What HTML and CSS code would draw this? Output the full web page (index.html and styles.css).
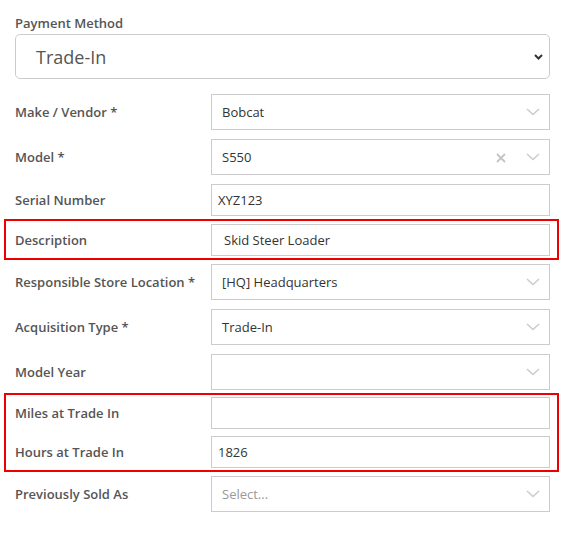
FILE: index.html
```html
<!DOCTYPE html>
<html lang="en">
<head>
<meta charset="UTF-8">
<meta name="viewport" content="width=device-width, initial-scale=1.0">
<title>Equipment - Trade-In</title>
<link rel="stylesheet" href="styles.css">
</head>
<body>
<form class="form">
  <div class="field-top">
    <label class="top-label">Payment Method</label>
    <div class="native-select">
      <span>Trade-In</span>
      <svg class="caret" width="9" height="6" viewBox="0 0 9 6"><path d="M1 1l3.5 3.5L8 1" fill="none" stroke="#333" stroke-width="2"/></svg>
    </div>
  </div>

  <div class="row">
    <label class="row-label">Make / Vendor *</label>
    <div class="select">
      <span class="value">Bobcat</span>
      <span class="indicators">
        <svg class="chev" width="14" height="8" viewBox="0 0 14 8"><path d="M1 1l6 5.5L13 1" fill="none" stroke="#ccc" stroke-width="1.6"/></svg>
      </span>
    </div>
  </div>

  <div class="row">
    <label class="row-label">Model *</label>
    <div class="select">
      <span class="value">S550</span>
      <span class="indicators">
        <svg class="clear" width="10" height="10" viewBox="0 0 10 10"><path d="M1 1l8 8M9 1l-8 8" fill="none" stroke="#c4c4c4" stroke-width="1.8"/></svg>
        <svg class="chev" width="14" height="8" viewBox="0 0 14 8"><path d="M1 1l6 5.5L13 1" fill="none" stroke="#ccc" stroke-width="1.6"/></svg>
      </span>
    </div>
  </div>

  <div class="row">
    <label class="row-label">Serial Number</label>
    <input class="input" value="XYZ123">
  </div>

  <div class="highlight">
    <div class="row">
      <label class="row-label">Description</label>
      <input class="input input-wide" value="Skid Steer Loader">
    </div>
  </div>

  <div class="row">
    <label class="row-label">Responsible Store Location *</label>
    <div class="select">
      <span class="value">[HQ] Headquarters</span>
      <span class="indicators">
        <svg class="chev" width="14" height="8" viewBox="0 0 14 8"><path d="M1 1l6 5.5L13 1" fill="none" stroke="#ccc" stroke-width="1.6"/></svg>
      </span>
    </div>
  </div>

  <div class="row">
    <label class="row-label">Acquisition Type *</label>
    <div class="select">
      <span class="value">Trade-In</span>
      <span class="indicators">
        <svg class="chev" width="14" height="8" viewBox="0 0 14 8"><path d="M1 1l6 5.5L13 1" fill="none" stroke="#ccc" stroke-width="1.6"/></svg>
      </span>
    </div>
  </div>

  <div class="row">
    <label class="row-label">Model Year</label>
    <div class="select">
      <span class="value"></span>
      <span class="indicators">
        <svg class="chev" width="14" height="8" viewBox="0 0 14 8"><path d="M1 1l6 5.5L13 1" fill="none" stroke="#ccc" stroke-width="1.6"/></svg>
      </span>
    </div>
  </div>

  <div class="highlight highlight-pair">
    <div class="row">
      <label class="row-label">Miles at Trade In</label>
      <input class="input" value="">
    </div>
    <div class="row">
      <label class="row-label">Hours at Trade In</label>
      <input class="input" value="1826">
    </div>
  </div>

  <div class="row">
    <label class="row-label">Previously Sold As</label>
    <div class="select">
      <span class="value placeholder">Select...</span>
      <span class="indicators">
        <svg class="chev" width="14" height="8" viewBox="0 0 14 8"><path d="M1 1l6 5.5L13 1" fill="none" stroke="#ccc" stroke-width="1.6"/></svg>
      </span>
    </div>
  </div>
</form>
</body>
</html>
```

FILE: styles.css
```css
body{margin:0;background:#fff;font-family:'Open Sans',sans-serif;color:#333;}
.form{display:flex;flex-direction:column;gap:9px;padding:14px 16px 0 15px;}

/* top payment select */
.field-top{display:flex;flex-direction:column;margin-bottom:6px;}
.top-label{font-size:13px;font-weight:600;color:#555;line-height:18px;margin-bottom:2px;}
.native-select{display:flex;align-items:center;justify-content:space-between;height:45px;box-sizing:border-box;border:1px solid #ccc;border-radius:5px;padding:0 5px 0 20px;font-size:18px;color:#555;}
.caret{margin-right:1px;}

/* label + control rows */
.row{display:flex;align-items:center;}
.row-label{width:196px;flex-shrink:0;font-size:13px;font-weight:600;color:#555;}
.select{flex:1;display:flex;align-items:center;justify-content:space-between;height:36px;box-sizing:border-box;border:1px solid #ccc;padding:0 9px 0 10px;font-size:13px;color:#333;}
.placeholder{color:#999;}
.indicators{display:flex;align-items:center;gap:20px;}
.clear{margin-top:1px;}
.input{flex:1;height:32px;box-sizing:border-box;border:1px solid #ccc;border-radius:0;padding:0 6px;font-family:'Open Sans',sans-serif;font-size:13px;color:#333;outline:none;}
.input-wide{padding-left:12px;}

/* red call-out boxes */
.highlight{display:flex;flex-direction:column;gap:7px;border:2px solid #e00;margin:-6px -9px -5px -11px;padding:3px 7px 2px 9px;}
.highlight-pair{padding-top:2px;}
```
